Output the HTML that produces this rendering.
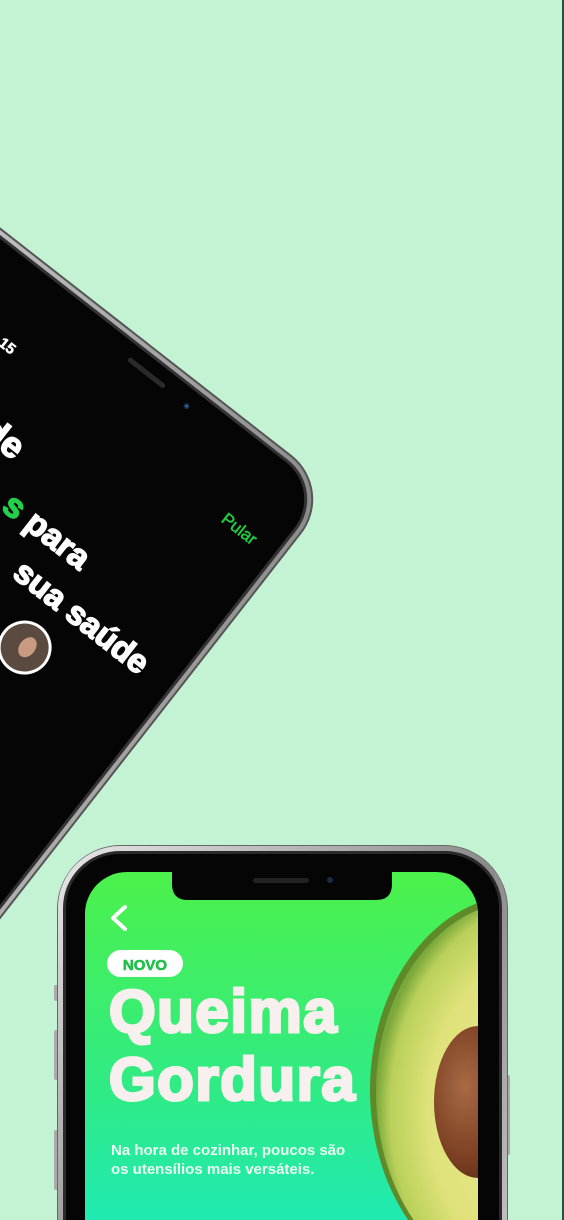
<!DOCTYPE html>
<html><head><meta charset="utf-8"><style>
html,body{margin:0;padding:0;width:564px;height:1220px;overflow:hidden;background:#c3f3d3;}
svg{display:block}
</style></head><body>
<svg width="564" height="1220" viewBox="0 0 564 1220" xmlns="http://www.w3.org/2000/svg">
<defs>
<linearGradient id="silver" x1="0" y1="0" x2="1" y2="1">
<stop offset="0" stop-color="#e8e8e8"/><stop offset="0.5" stop-color="#8a8a8a"/><stop offset="1" stop-color="#d0d0d0"/>
</linearGradient>
<linearGradient id="scr" x1="0" y1="0" x2="0" y2="1">
<stop offset="0" stop-color="#4cf14a"/><stop offset="0.55" stop-color="#2feb86"/><stop offset="1" stop-color="#1ae9c4"/>
</linearGradient>
<radialGradient id="flesh" cx="0.6" cy="0.55" r="0.6">
<stop offset="0" stop-color="#f0ec9a"/><stop offset="0.7" stop-color="#dfe27a"/><stop offset="0.92" stop-color="#b9d05a"/><stop offset="1" stop-color="#7aa83a"/>
</radialGradient>
<radialGradient id="pit" cx="0.35" cy="0.4" r="0.7">
<stop offset="0" stop-color="#a86a44"/><stop offset="0.7" stop-color="#7a3f22"/><stop offset="1" stop-color="#5a2a15"/>
</radialGradient>
<clipPath id="scrclip"><rect x="85" y="872" width="393" height="400" rx="42"/></clipPath>
</defs>

<!-- rotated phone -->
<g transform="translate(333,490) rotate(38)">
<rect x="-760" y="-2" width="762" height="980" rx="56" fill="#555"/>
<rect x="-758" y="0" width="758" height="976" rx="54" fill="url(#silver)"/>
<rect x="-754" y="4" width="750" height="968" rx="50" fill="#333"/>
<rect x="-751" y="7" width="744" height="962" rx="47" fill="#050505"/>
<rect x="-242" y="20" width="46" height="5" rx="2.5" fill="#2a2a2a"/>
<circle cx="-167" cy="24" r="3" fill="#1a2a4a"/>
<circle cx="-167" cy="24" r="1.3" fill="#3a6aa8"/>
<g font-family="Liberation Sans, sans-serif" font-weight="bold" fill="#fff" stroke="#fff" text-anchor="end">
<text x="-337" y="92" font-size="15" stroke-width="0.5">15</text>
<text x="-270" y="174" font-size="36" stroke-width="1.5">de</text>
<text x="-150" y="220" font-size="34" stroke-width="1.5"><tspan fill="#22d04a" stroke="#22d04a">s</tspan> para</text>
<text x="-39" y="266" font-size="33" stroke-width="1.5">sua saúde</text>
</g>
<text x="-30" y="94" font-family="Liberation Sans, sans-serif" font-size="17" fill="#20cc3e" stroke="#20cc3e" stroke-width="0.5" text-anchor="end">Pular</text>
<circle cx="-146" cy="314" r="27" fill="#fff"/>
<circle cx="-146" cy="314" r="24" fill="#5a4a40"/>
<ellipse cx="-144" cy="312" rx="8" ry="11" fill="#c89a80"/>
</g>

<!-- upright phone -->
<rect x="54" y="985" width="5" height="16" rx="2" fill="#aaa"/>
<rect x="54" y="1030" width="5" height="50" rx="2" fill="#aaa"/>
<rect x="54" y="1130" width="5" height="60" rx="2" fill="#aaa"/>
<rect x="505" y="1075" width="5" height="80" rx="2" fill="#aaa"/>
<rect x="57" y="845" width="451" height="500" rx="64" fill="#666"/>
<rect x="58" y="846" width="449" height="500" rx="62" fill="url(#silver)"/>
<rect x="63" y="851" width="439" height="500" rx="57" fill="#2a2a2a"/>
<rect x="66" y="854" width="433" height="500" rx="54" fill="#050505"/>
<g clip-path="url(#scrclip)">
<rect x="85" y="872" width="393" height="400" fill="url(#scr)"/>
<ellipse cx="520" cy="1090" rx="150" ry="195" fill="#5f8a2a"/>
<ellipse cx="522" cy="1092" rx="146" ry="191" fill="url(#flesh)"/>
<ellipse cx="478" cy="1102" rx="44" ry="76" fill="url(#pit)"/>
</g>
<path d="M172 868 H392 V884 Q392 900 376 900 H188 Q172 900 172 884 Z" fill="#050505"/>
<rect x="253" y="878" width="56" height="5" rx="2.5" fill="#222"/>
<circle cx="330" cy="880" r="3" fill="#1a2a4a"/>
<path d="M125 907 L113 918 L125 929" fill="none" stroke="#fff" stroke-width="4" stroke-linecap="round" stroke-linejoin="round"/>
<rect x="107" y="950" width="76" height="27" rx="13.5" fill="#fff"/>
<text x="145" y="970" font-family="Liberation Sans, sans-serif" font-weight="bold" font-size="15" fill="#22c04a" stroke="#22c04a" stroke-width="0.6" text-anchor="middle">NOVO</text>
<text x="109" y="1032" font-family="Liberation Sans, sans-serif" font-weight="bold" font-size="60" fill="#f8f0ee" stroke="#f8f0ee" stroke-width="3" letter-spacing="1.5">Queima</text>
<text x="109" y="1100" font-family="Liberation Sans, sans-serif" font-weight="bold" font-size="60" fill="#f8f0ee" stroke="#f8f0ee" stroke-width="3" letter-spacing="1.5">Gordura</text>
<text x="111" y="1155" font-family="Liberation Sans, sans-serif" font-weight="bold" font-size="15" fill="#eafff0">Na hora de cozinhar, poucos são</text>
<text x="111" y="1174" font-family="Liberation Sans, sans-serif" font-weight="bold" font-size="15" fill="#eafff0">os utensílios mais versáteis.</text>

<rect x="562" y="0" width="2" height="1220" fill="#2f4f3f"/>
</svg>
</body></html>
